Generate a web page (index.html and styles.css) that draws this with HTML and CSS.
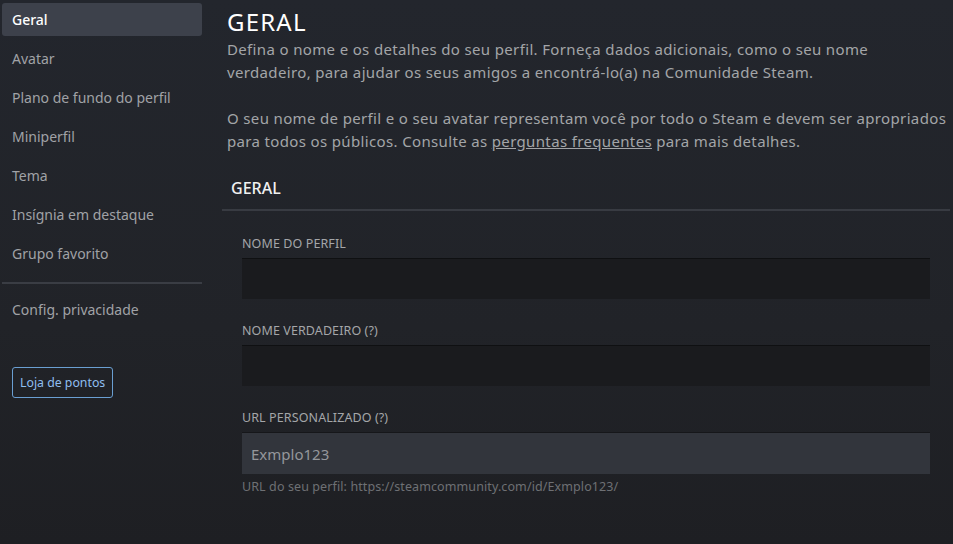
FILE: index.html
```html
<!DOCTYPE html>
<html lang="pt-BR">
<head>
<meta charset="utf-8">
<title>Geral</title>
<link rel="stylesheet" href="styles.css">
</head>
<body>
<div class="page">
  <nav class="sidebar">
    <a class="nav-item active">Geral</a>
    <a class="nav-item">Avatar</a>
    <a class="nav-item">Plano de fundo do perfil</a>
    <a class="nav-item">Miniperfil</a>
    <a class="nav-item">Tema</a>
    <a class="nav-item">Insígnia em destaque</a>
    <a class="nav-item">Grupo favorito</a>
    <div class="divider"></div>
    <a class="nav-item">Config. privacidade</a>
    <a class="points-btn">Loja de pontos</a>
  </nav>
  <main class="main">
    <div class="intro">
      <h1 class="title">GERAL</h1>
      <p class="desc">Defina o nome e os detalhes do seu perfil. Forneça dados adicionais, como o seu nome<br>verdadeiro, para ajudar os seus amigos a encontrá-lo(a) na Comunidade Steam.</p>
      <p class="desc">O seu nome de perfil e o seu avatar representam você por todo o Steam e devem ser apropriados<br>para todos os públicos. Consulte as <a class="link">perguntas frequentes</a> para mais detalhes.</p>
    </div>
    <section class="section">
      <h2 class="section-head">GERAL</h2>
      <div class="fields">
        <div class="field">
          <div class="label">NOME DO PERFIL</div>
          <div class="input"></div>
        </div>
        <div class="field">
          <div class="label">NOME VERDADEIRO (?)</div>
          <div class="input"></div>
        </div>
        <div class="field">
          <div class="label">URL PERSONALIZADO (?)</div>
          <div class="input filled">Exmplo123</div>
          <div class="hint">URL do seu perfil: https://steamcommunity.com/id/Exmplo123/</div>
        </div>
      </div>
    </section>
  </main>
</div>
</body>
</html>
```

FILE: styles.css
```css
html, body {
  margin: 0;
  padding: 0;
  height: 100%;
}
body {
  background: linear-gradient(180deg, #23262d 0%, #212328 60%, #1e1f23 100%);
  font-family: "Noto Sans", "Open Sans", sans-serif;
  color: #a3a5a8;
  overflow: hidden;
}
.page {
  display: flex;
  height: 544px;
}
.sidebar {
  width: 200px;
  padding: 3px 0 0 2px;
  display: flex;
  flex-direction: column;
  flex-shrink: 0;
}
.nav-item {
  display: flex;
  align-items: center;
  height: 33px;
  padding-left: 10px;
  margin-bottom: 6px;
  font-size: 14px;
  color: #a0a2a6;
  border-radius: 3px;
  white-space: nowrap;
}
.nav-item.active {
  background: #3d414b;
  color: #ffffff;
  font-weight: 500;
}
.divider {
  height: 2px;
  background: #3a3d44;
  margin: 6px 0 9px;
}
.points-btn {
  align-self: flex-start;
  margin: 35px 0 0 10px;
  height: 29px;
  padding: 0 7px;
  display: flex;
  align-items: center;
  border: 1px solid #6a9fd2;
  border-radius: 3px;
  font-size: 12.3px;
  color: #8fbef0;
}
.main {
  flex: 1;
  padding: 8px 3px 0 20px;
  min-width: 0;
}
.intro {
  padding-left: 5px;
  margin-right: -3px;
}
.title {
  margin: 0;
  font-size: 24px;
  line-height: 28px;
  font-weight: 400;
  letter-spacing: 1.2px;
  color: #ffffff;
}
.desc {
  margin: 2px 0 23px;
  font-size: 15px;
  line-height: 23px;
  letter-spacing: 0.35px;
  color: #a3a5a8;
  white-space: nowrap;
}
.desc + .desc {
  margin-top: 0;
}
.link {
  color: #a3a5a8;
  text-decoration: underline;
}
.section {
  margin-top: 14px;
}
.section-head {
  margin: 0;
  padding: 0 0 9px 9px;
  font-size: 16px;
  line-height: 24px;
  font-weight: 500;
  color: #f0f0f0;
  border-bottom: 2px solid #383b42;
}
.fields {
  padding: 25px 20px 0 20px;
}
.field {
  margin-bottom: 24px;
}
.label {
  font-size: 12.5px;
  line-height: 16px;
  color: #a4a6a9;
  margin-bottom: 6px;
  letter-spacing: 0.1px;
}
.input {
  height: 40px;
  background: #1a1b1e;
  border-top: 1px solid #0f1012;
  box-sizing: content-box;
  display: flex;
  align-items: center;
  padding-left: 9px;
  font-size: 15px;
  color: #95979b;
}
.input.filled {
  height: 41px;
  background: #32353c;
  border-top: 1px solid #16171a;
}
.hint {
  margin-top: 5px;
  font-size: 12.5px;
  line-height: 16px;
  letter-spacing: 0.1px;
  color: #6e7074;
}
```
